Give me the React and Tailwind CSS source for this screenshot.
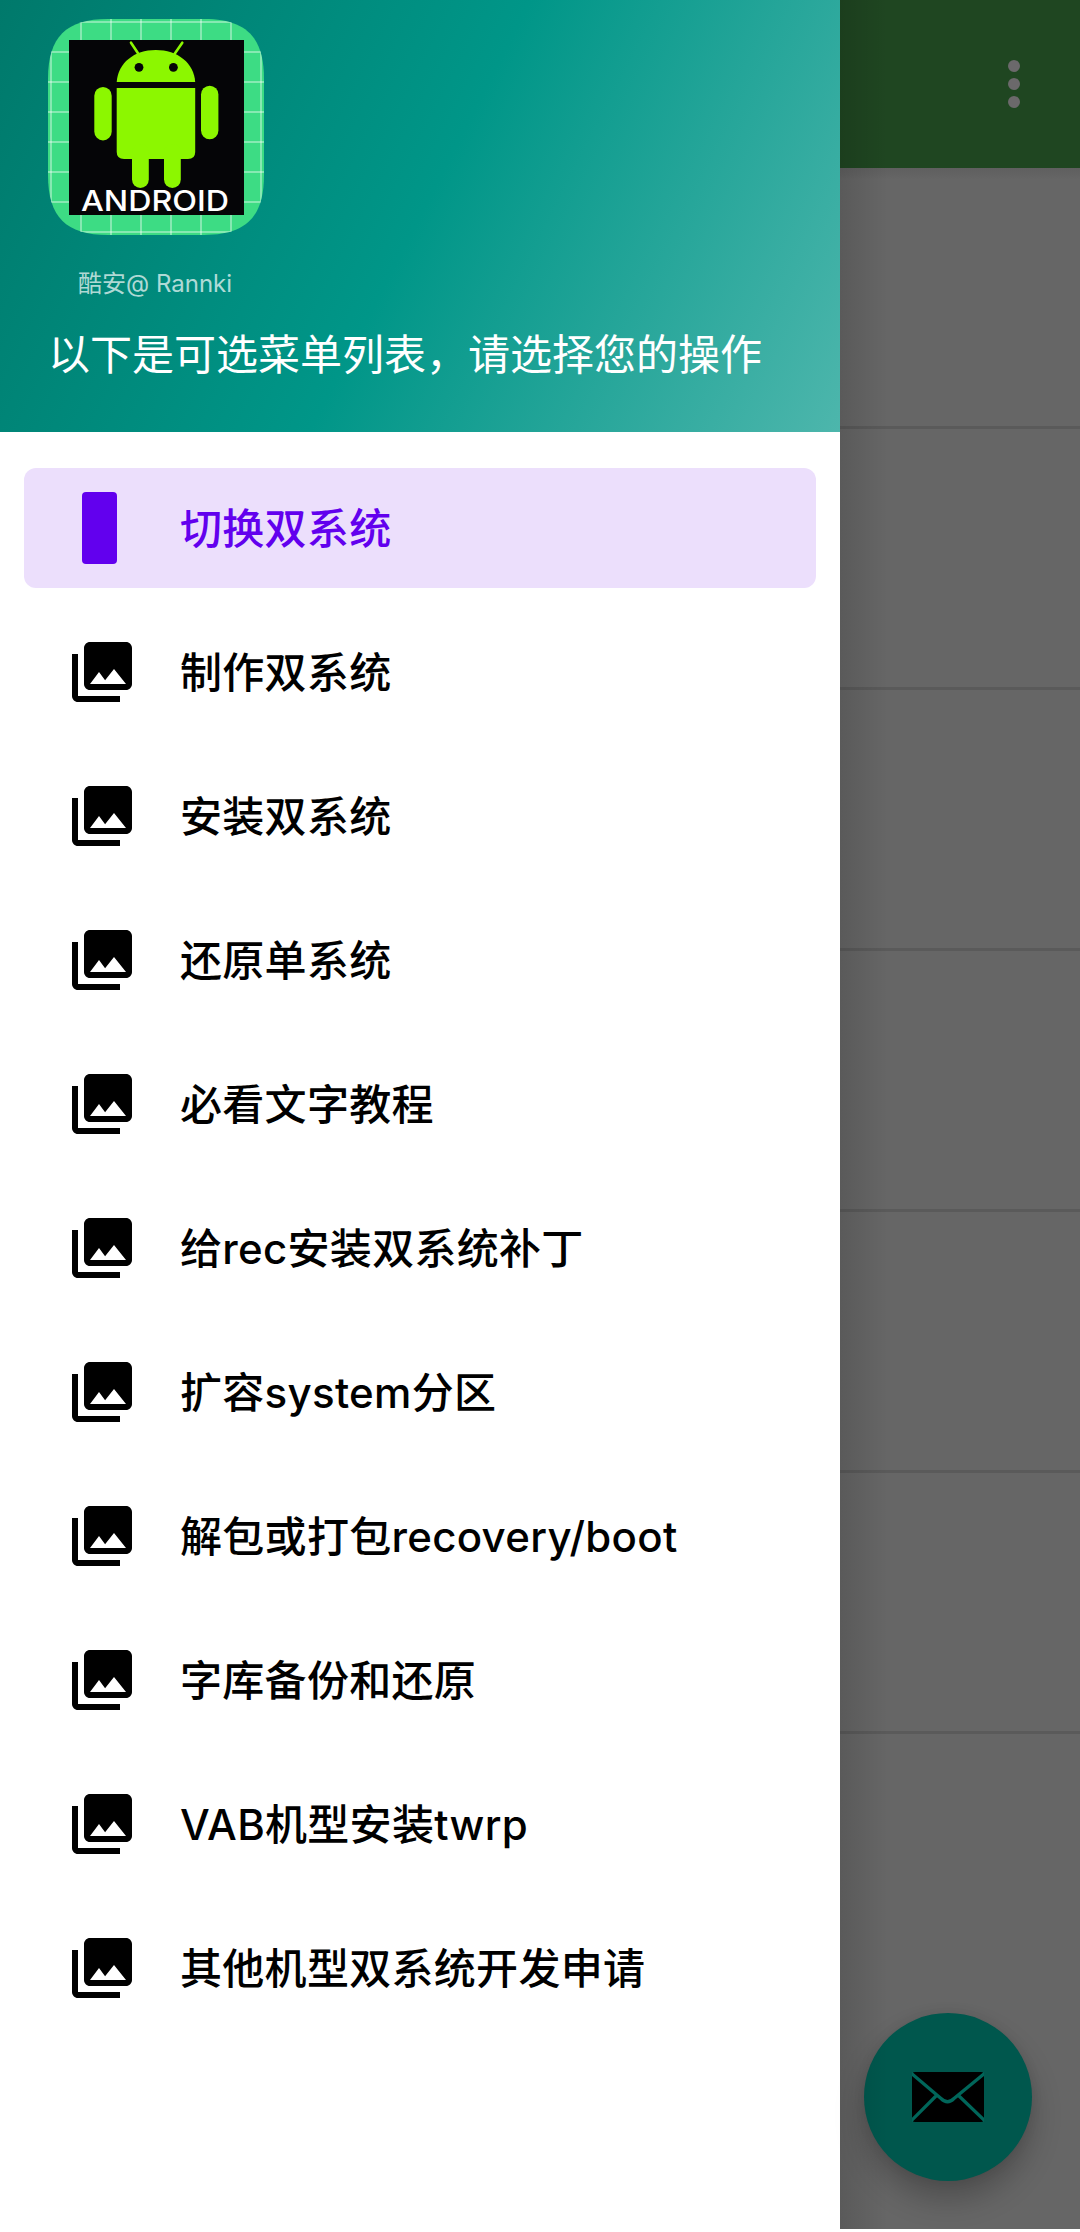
const menuItems = [
  '切换双系统',
  '制作双系统',
  '安装双系统',
  '还原单系统',
  '必看文字教程',
  '给rec安装双系统补丁',
  '扩容system分区',
  '解包或打包recovery/boot',
  '字库备份和还原',
  'VAB机型安装twrp',
  '其他机型双系统开发申请',
];

const gridLines = [3, 33, 63, 93, 123, 153, 183, 213];
const listRows = [1, 2, 3, 4, 5];

function AppLogo() {
  return (
    <svg width="216" height="216" viewBox="0 0 216 216">
      <defs>
        <clipPath id="squircle">
          <path d="M0 60C0 18 18 0 60 0H156C198 0 216 18 216 60V156C216 198 198 216 156 216H60C18 216 0 198 0 156Z" />
        </clipPath>
      </defs>
      <g clipPath="url(#squircle)">
        <rect width="216" height="216" fill="#3ddc84" />
        <g stroke="#fff" strokeOpacity="0.38" strokeWidth="2">
          {gridLines.map((n) => (
            <path key={n} d={`M${n} 0V216M0 ${n}H216`} />
          ))}
        </g>
      </g>
      <rect x="21" y="21" width="175" height="175" fill="#050507" />

      {/* ROBOT */}
      <g fill="#8cf700">
        <path d="M68.7 63C70 44 86 31 107.8 31S146 44 147.2 63Z" />
        <path d="M68.7 69H147.2V133Q147.2 140 140 140H76Q68.7 140 68.7 133Z" />
        <rect x="46.3" y="68" width="17.4" height="53.4" rx="8.7" />
        <rect x="153" y="66.7" width="17.4" height="53.6" rx="8.7" />
        <rect x="84" y="125" width="16.8" height="44" rx="8.4" />
        <rect x="116" y="125" width="16.8" height="44" rx="8.4" />
        <path
          d="M83 23.7L90.5 35M134.3 23.7L126.5 35"
          stroke="#8cf700"
          strokeWidth="2.6"
          strokeLinecap="round"
        />
      </g>
      <circle cx="91" cy="48.3" r="4.4" fill="#050507" />
      <circle cx="125.4" cy="48.3" r="4.4" fill="#050507" />
      <text
        x="33"
        y="191.6"
        textLength="148"
        lengthAdjust="spacingAndGlyphs"
        fill="#fff"
        className="font-['Inter',sans-serif] text-[28px] font-medium"
      >
        ANDROID
      </text>
    </svg>
  );
}

function DrawerHeader() {
  return (
    <header className="h-[432px] bg-[linear-gradient(117.2deg,#00796b_0%,#009688_50%,#4db6ac_100%)] px-12 pt-[19px]">
      <AppLogo />
      <p className="mt-[31px] pl-[30px] text-2xl leading-9 whitespace-pre text-white/70">酷安@ Rannki</p>
      <h1 className="mt-[23px] text-[42px] leading-[60px] whitespace-nowrap text-white">
        以下是可选菜单列表，请选择您的操作
      </h1>
    </header>
  );
}

function GalleryIcon() {
  return (
    <svg width="72" height="72" viewBox="0 0 24 24" fill="currentColor">
      <path d="M22 16V4c0-1.1-.9-2-2-2H8c-1.1 0-2 .9-2 2v12c0 1.1.9 2 2 2h12c1.1 0 2-.9 2-2zm-11-4l2.03 2.71L16 11l4 5H8l3-4zM2 6v14c0 1.1.9 2 2 2h14v-2H4V6H2z" />
    </svg>
  );
}

function MenuItem({ label, active }) {
  return (
    <li
      className={
        active
          ? 'flex h-[120px] items-center rounded-xl bg-[#ecdffc] text-[#6200ee]'
          : 'flex h-[120px] items-center rounded-xl text-black'
      }
    >
      <span className="flex w-[156px] pl-[42px]">
        {active ? (
          <span className="ml-[15.5px] h-[72px] w-[35.5px] rounded bg-[#6200ee]" />
        ) : (
          <GalleryIcon />
        )}
      </span>
      <span className="pt-0.5 text-[42px] leading-[60px] font-[450] tracking-[0.3px] whitespace-nowrap">{label}</span>
    </li>
  );
}

function MailIcon() {
  return (
    <svg width="72" height="50" viewBox="0 0 72 50">
      <rect width="72" height="50" rx="3" />
      <path
        d="M-1 1L29 26.5Q35.5 33 42 26.5L73 1M-1 49L24 24M73 49L47 24"
        fill="none"
        stroke="#00665a"
        strokeWidth="3.2"
      />
    </svg>
  );
}

export default function App() {
  return (
    <div className="flex h-[2232px] w-[1080px] overflow-hidden bg-white font-['Inter','Noto_Sans_CJK_SC',sans-serif]">
      {/* DRAWER */}
      <aside className="w-[840px] shrink-0 bg-white">
        <DrawerHeader />
        <ul className="flex flex-col gap-6 px-6 pt-9">
          {menuItems.map((label, i) => (
            <MenuItem key={label} label={label} active={i === 0} />
          ))}
        </ul>
      </aside>

      {/* DIMMED PAGE */}
      <main className="relative flex h-[2229px] flex-1 flex-col bg-[#666]">
        <div className="flex h-[168px] items-center justify-end bg-[#1f4621] pr-[60px]">
          <div className="flex flex-col gap-1.5">
            <span className="size-3 rounded-full bg-[#6b696b]" />
            <span className="size-3 rounded-full bg-[#6b696b]" />
            <span className="size-3 rounded-full bg-[#6b696b]" />
          </div>
        </div>
        <div className="h-[261px] border-b-3 border-[#5a5a5a] bg-[linear-gradient(#5f5f5f,#666_12px)]" />
        {listRows.map((row) => (
          <div key={row} className="h-[261px] border-b-3 border-[#5a5a5a]" />
        ))}
        <div className="flex flex-1 items-end justify-end pr-12 pb-12">
          <button className="flex size-[168px] items-center justify-center rounded-full bg-[#00574d] shadow-[0_18px_30px_rgba(0,0,0,0.24),0_0_12px_rgba(0,0,0,0.08)]">
            <MailIcon />
          </button>
        </div>
        <div className="pointer-events-none absolute inset-y-0 left-0 w-12 bg-linear-to-r from-black/12 to-transparent" />
      </main>
    </div>
  );
}
